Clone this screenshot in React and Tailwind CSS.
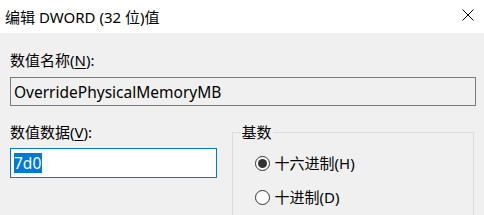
import React from "react";

const Radio = ({ checked, label }) => (
  <label className="flex items-center h-[20px] gap-[5px]">
    <span className="w-[15px] h-[15px] rounded-full border border-[#333333] bg-white flex items-center justify-center">
      {checked && <span className="w-[9px] h-[9px] rounded-full bg-[#333333]" />}
    </span>
    <span>{label}</span>
  </label>
);

export default function App() {
  return (
    <div className="w-[484px] h-[215px] overflow-hidden bg-[#f0f0f0] text-black text-[15px] leading-[20px] font-['Noto_Sans','Noto_Sans_CJK_SC',sans-serif]">
      <div className="h-[33px] bg-white flex items-center justify-between pl-[5px] pr-[10px]">
        <span>编辑 DWORD (32 位)值</span>
        <svg width="12" height="12" viewBox="0 0 12 12" className="mt-[-3px]">
          <path d="M0.5 0.5 L11.5 11.5 M11.5 0.5 L0.5 11.5" stroke="#000" strokeWidth="1" fill="none" />
        </svg>
      </div>
      <div className="px-[10px] pt-[17px]">
        <div className="h-[20px]">
          数值名称(<span className="underline underline-offset-2">N</span>):
        </div>
        <div className="mt-[7px] w-[466px] h-[29px] border border-[#7a7a7a] flex items-center pl-[3px] text-[15.5px]">
          OverridePhysicalMemoryMB
        </div>
        <div className="flex gap-[15px] mt-[16px]">
          <div className="w-[207px]">
            <div className="h-[20px]">
              数值数据(<span className="underline underline-offset-2">V</span>):
            </div>
            <div className="mt-[6px] h-[30px] border border-[#0078d7] bg-white flex items-center pl-[3px] text-[15.5px]">
              <span className="bg-[#0078d7] text-white pr-[1px]">7d0</span>
            </div>
          </div>
          <fieldset className="w-[243px] h-[120px] border border-[#dcdcdc] pl-[22px]">
            <legend className="ml-[-14px] px-[1px]">基数</legend>
            <div className="flex flex-col gap-[14px] mt-[11px]">
              <Radio checked label="十六进制(H)" />
              <Radio label="十进制(D)" />
            </div>
          </fieldset>
        </div>
      </div>
    </div>
  );
}
